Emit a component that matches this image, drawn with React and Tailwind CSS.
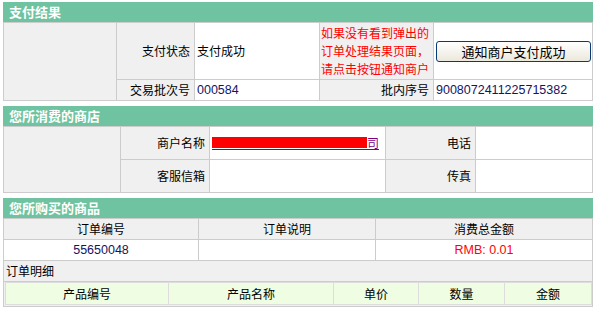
import React from 'react';

const cn = "font-['Noto_Sans_CJK_SC','Noto_Sans',sans-serif]";
const num = "font-['Liberation_Sans','Noto_Sans_CJK_SC',sans-serif] text-[12.5px] text-[#141464]";

const SectionTitle = ({ children, className = '' }) => (
  <div className={`h-[20px] w-[590px] bg-[#6fc3a1] pl-[6px] text-[13px] font-bold leading-[20px] text-white ${className}`}>
    {children}
  </div>
);

const Label = ({ children, className = '' }) => (
  <div className={`flex items-center justify-end bg-[#f0f0f0] pr-[4px] ${className}`}>{children}</div>
);

const Cell = ({ children, className = '' }) => (
  <div className={`flex items-center bg-white pl-[2px] ${className}`}>{children}</div>
);

const App = () => {
  return (
    <div className={`min-h-[315px] bg-white pl-[3px] pt-[2px] text-[12px] text-black ${cn}`}>
      {/* 支付结果 */}
      <SectionTitle>支付结果</SectionTitle>
      <div className="grid w-[590px] grid-cols-[112px_77px_124px_113px_158px] grid-rows-[56px_20px] gap-px border border-[#cccccc] bg-[#cccccc]">
        <div className="row-span-2 bg-[#f0f0f0]" />
        <Label>支付状态</Label>
        <Cell>支付成功</Cell>
        <div className="flex flex-col justify-center bg-[#f0f0f0] pl-[1px] leading-[18px] text-[#ff0000]">
          <span>如果没有看到弹出的</span>
          <span>订单处理结果页面，</span>
          <span>请点击按钮通知商户</span>
        </div>
        <Cell>
          <button className="h-[21px] w-[155px] rounded-[3px] border border-[#0a3a73] bg-gradient-to-b from-white to-[#ebe8dc] text-[13px] leading-[19px] text-black">
            通知商户支付成功
          </button>
        </Cell>
        <Label>交易批次号</Label>
        <Cell className={num}>000584</Cell>
        <Label>批内序号</Label>
        <Cell className={num}>9008072411225715382</Cell>
      </div>

      {/* 您所消费的商店 */}
      <SectionTitle className="mt-[5px]">您所消费的商店</SectionTitle>
      <div className="grid w-[590px] grid-cols-[116px_88px_175px_89px_116px] grid-rows-[32px_32px] gap-px border border-[#cccccc] bg-[#cccccc]">
        <div className="row-span-2 bg-[#f0f0f0]" />
        <Label>商户名称</Label>
        <Cell>
          <a className="flex items-end border-b border-[#800080] text-[#800080]" href="#">
            <span className="mb-[1px] inline-block h-[11px] w-[155px] bg-[#ff0000]" />
            <span className="leading-[13px]">司</span>
          </a>
        </Cell>
        <Label>电话</Label>
        <Cell />
        <Label>客服信箱</Label>
        <Cell />
        <Label>传真</Label>
        <Cell />
      </div>

      {/* 您所购买的商品 */}
      <SectionTitle className="mt-[5px]">您所购买的商品</SectionTitle>
      <div className="grid w-[590px] grid-cols-[194px_176px_216px] grid-rows-[20px_20px_20px_auto] gap-px border border-[#cccccc] bg-[#cccccc]">
        <div className="flex items-center justify-center bg-[#f0f0f0]">订单编号</div>
        <div className="flex items-center justify-center bg-[#f0f0f0]">订单说明</div>
        <div className="flex items-center justify-center bg-[#f0f0f0]">消费总金额</div>
        <div className={`flex items-center justify-center bg-white ${num}`}>55650048</div>
        <div className="bg-white" />
        <div className="flex items-center justify-center bg-white font-['Liberation_Sans',sans-serif] text-[12.5px] text-[#ff0000]">
          RMB: 0.01
        </div>
        <div className="col-span-3 flex items-center bg-[#f0f0f0] pl-[2px]">订单明细</div>
        <div className="col-span-3 bg-[#f0f0f0] pb-px pl-px">
          <div className="grid grid-cols-[162px_164px_84px_85px_86px] gap-px border border-[#dddddd] bg-[#dddddd]">
            {['产品编号', '产品名称', '单价', '数量', '金额'].map((t) => (
              <div key={t} className="flex h-[21px] items-center justify-center bg-[#effde2]">
                {t}
              </div>
            ))}
          </div>
        </div>
      </div>
    </div>
  );
};

export default App;
